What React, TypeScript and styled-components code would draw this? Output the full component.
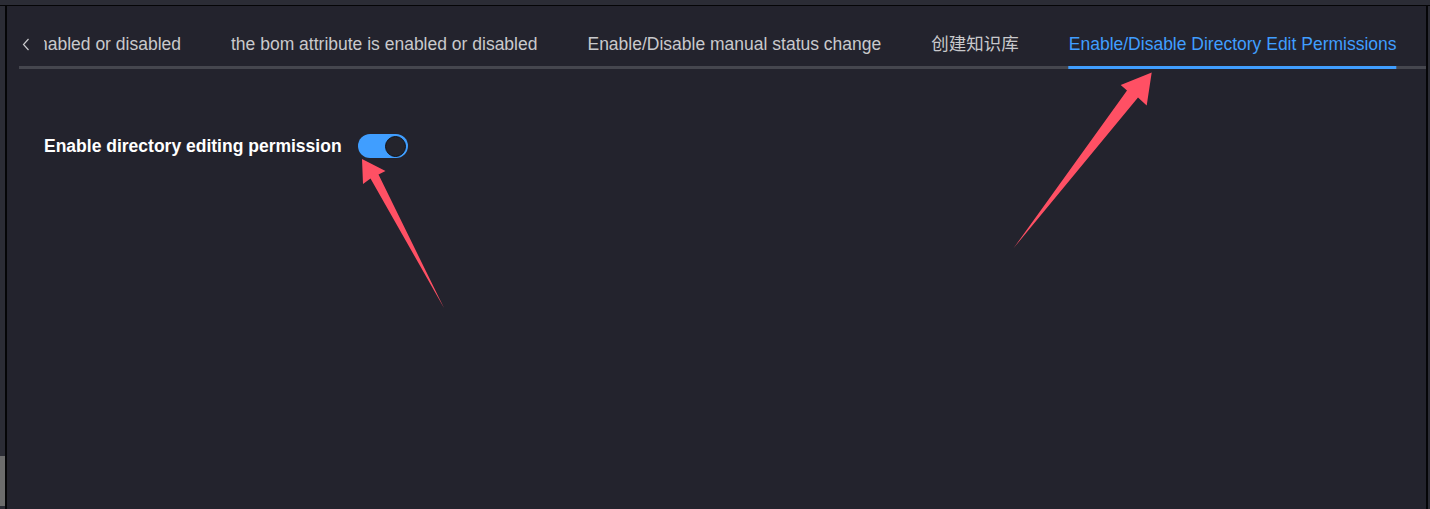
import React from "react";
import styled, { createGlobalStyle } from "styled-components";

const GlobalStyle = createGlobalStyle`
  html, body {
    margin: 0;
    padding: 0;
    background: #23232d;
    overflow: hidden;
  }
  body {
    font-family: "Liberation Sans", "Noto Sans CJK SC", Arial, sans-serif;
  }
`;

const Frame = styled.div`
  position: relative;
  width: 1430px;
  height: 509px;
  display: flex;
  flex-direction: column;
  background: #23232d;
  overflow: hidden;
`;

const TopStrip = styled.div`
  height: 5px;
  flex: none;
  background: #2b2c35;
  border-bottom: 1px solid #050507;
`;

const Middle = styled.div`
  flex: 1;
  display: flex;
  min-height: 0;
`;

const LeftRail = styled.div`
  width: 5px;
  flex: none;
  background: #2b2c35;
  border-right: 2px solid #050507;
  display: flex;
  flex-direction: column;
  justify-content: flex-end;
`;

const Thumb = styled.div`
  height: 50px;
  margin-bottom: 3px;
  background: #6c6c6c;
`;

const RightRail = styled.div`
  width: 2px;
  flex: none;
  background: #2b2c35;
  border-left: 2px solid #050507;
`;

const Panel = styled.div`
  flex: 1;
  min-width: 0;
  padding-left: 12px;
  background: #23232d;
`;

const TabsHeader = styled.div`
  position: relative;
  margin-top: 14px;
  height: 49px;
  display: flex;
  &::after {
    content: "";
    position: absolute;
    left: 0;
    right: 0;
    bottom: 0;
    height: 3px;
    background: #45464e;
  }
`;

const PrevButton = styled.div`
  width: 25px;
  height: 48px;
  flex: none;
  display: flex;
  align-items: center;
  padding-left: 3px;
  box-sizing: border-box;
  color: #c9c9cc;
`;

const Viewport = styled.div`
  position: relative;
  z-index: 1;
  flex: 1;
  min-width: 0;
  overflow: hidden;
`;

const TabList = styled.div<{ $offset: number }>`
  display: flex;
  gap: 50px;
  transform: translateX(${(p) => -p.$offset}px);
`;

const Tab = styled.div<{ $active?: boolean }>`
  position: relative;
  height: 49px;
  line-height: 48px;
  font-size: 17.5px;
  white-space: nowrap;
  color: ${(p) => (p.$active ? "#409eff" : "#c9c9cc")};
  &::after {
    content: "";
    position: absolute;
    left: 0;
    right: 0;
    bottom: 0;
    height: 3px;
    background: ${(p) => (p.$active ? "#409eff" : "transparent")};
  }
`;

const FormRow = styled.div`
  margin-top: 65px;
  padding-left: 25px;
  display: flex;
  align-items: center;
  gap: 16px;
`;

const Label = styled.div`
  font-size: 17.5px;
  font-weight: 700;
  line-height: 24px;
  color: #ffffff;
  white-space: nowrap;
`;

const SwitchTrack = styled.div<{ $on: boolean }>`
  position: relative;
  width: 50px;
  height: 24px;
  border-radius: 12px;
  background: ${(p) => (p.$on ? "#409eff" : "#4c4d55")};
  display: flex;
  align-items: center;
  justify-content: ${(p) => (p.$on ? "flex-end" : "flex-start")};
  padding: 0 2px;
  box-sizing: border-box;
`;

const SwitchKnob = styled.div`
  width: 21px;
  height: 21px;
  border-radius: 50%;
  background: #24242c;
  border: 1.5px solid #111116;
  box-sizing: border-box;
`;

const Annotations = styled.svg`
  position: absolute;
  left: 0;
  top: 0;
  width: 1430px;
  height: 509px;
  pointer-events: none;
`;

const tabs = [
  "Enabled or disabled",
  "the bom attribute is enabled or disabled",
  "Enable/Disable manual status change",
  "创建知识库",
  "Enable/Disable Directory Edit Permissions",
];

export default function App() {
  return (
    <>
      <GlobalStyle />
      <Frame>
        <TopStrip />
        <Middle>
          <LeftRail>
            <Thumb />
          </LeftRail>
          <Panel>
            <TabsHeader>
              <PrevButton>
                <svg width="8" height="13" viewBox="0 0 8 13">
                  <path d="M6.5 1 L1.5 6.5 L6.5 12" fill="none" stroke="#c9c9cc" strokeWidth="1.2" />
                </svg>
              </PrevButton>
              <Viewport>
                <TabList $offset={17.7}>
                  {tabs.map((t, i) => (
                    <Tab key={t} $active={i === tabs.length - 1}>
                      {t}
                    </Tab>
                  ))}
                </TabList>
              </Viewport>
            </TabsHeader>
            <FormRow>
              <Label>Enable directory editing permission</Label>
              <SwitchTrack $on>
                <SwitchKnob />
              </SwitchTrack>
            </FormRow>
          </Panel>
          <RightRail />
        </Middle>
        <Annotations viewBox="0 0 1430 509">
          <polygon
            points="362,159 385.5,171 378.5,174.5 444,308 370.5,178.5 363,184"
            fill="#ff5064"
          />
          <polygon
            points="1151.7,72.5 1146.7,105.5 1138,97.5 1013.3,248.5 1127,90.5 1120.7,85"
            fill="#ff5064"
          />
        </Annotations>
      </Frame>
    </>
  );
}
